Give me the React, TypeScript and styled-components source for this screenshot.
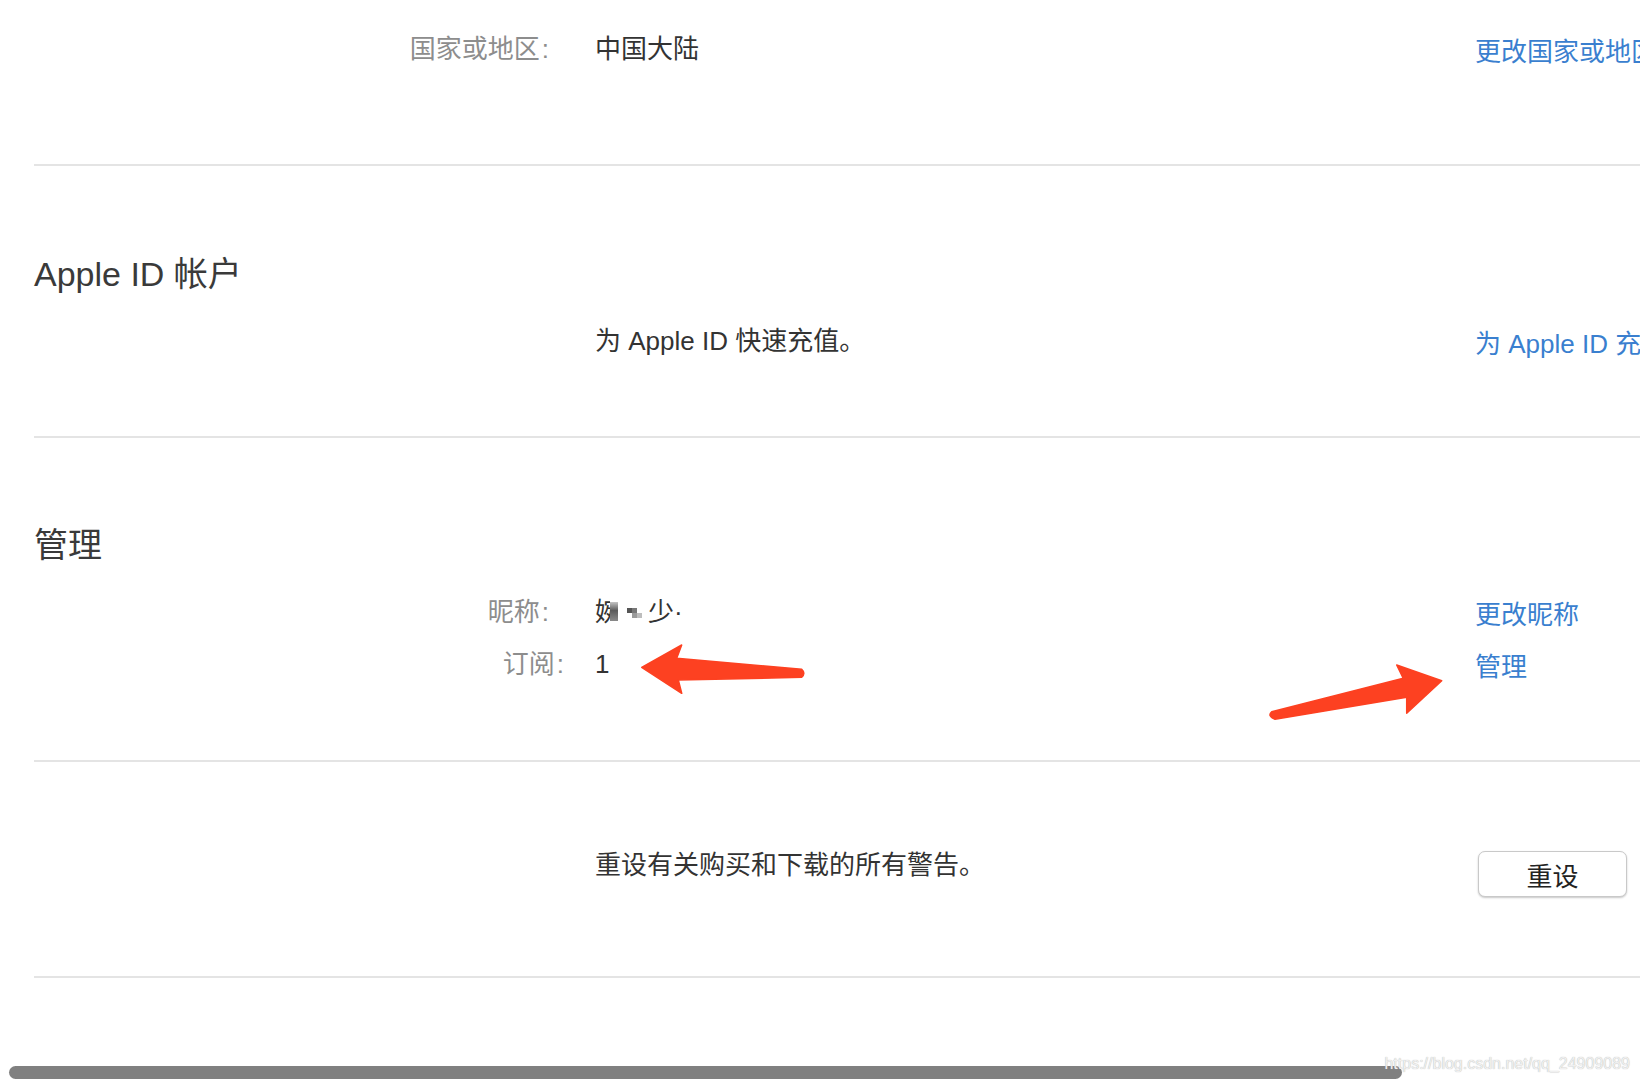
import React from 'react';
import styled, { createGlobalStyle } from 'styled-components';

const GlobalStyle = createGlobalStyle`
  html, body {
    margin: 0;
    padding: 0;
    background: #fff;
    overflow: hidden;
  }
  body {
    font-family: "Liberation Sans", "Noto Sans CJK SC", sans-serif;
  }
`;

const Page = styled.div`
  position: relative;
  width: 1640px;
  height: 1084px;
  overflow: hidden;
  background: #fff;
`;

const Content = styled.div`
  padding-left: 34px;
  width: 1800px;
`;

const Section = styled.section<{ $top: number; $bottom: number }>`
  padding: ${(p) => p.$top}px 0 ${(p) => p.$bottom}px;
  border-bottom: 2px solid #e4e4e4;
`;

const Heading = styled.h2`
  margin: 0 0 32px;
  height: 40px;
  font-size: 34px;
  line-height: 40px;
  font-weight: 400;
  color: #3a3a3a;
  white-space: nowrap;
`;

const Rows = styled.div`
  display: flex;
  flex-direction: column;
  gap: 22px;
`;

const Row = styled.div`
  display: grid;
  grid-template-columns: 517px 924px 1fr;
  align-items: start;
  font-size: 26px;
  line-height: 30px;
`;

const Label = styled.div<{ $shift?: number }>`
  height: 30px;
  text-align: right;
  color: #8d8d8d;
  white-space: nowrap;
  margin-right: ${(p) => -(p.$shift || 0)}px;
`;

const Colon = styled.span`
  margin-left: 2px;
  margin-right: 2px;
`;

const Value = styled.div`
  height: 30px;
  padding-left: 44px;
  color: #333;
  white-space: nowrap;
  display: flex;
  align-items: center;
`;

const Link = styled.a`
  display: block;
  height: 30px;
  transform: translateY(3px);
  color: #3a7fcf;
  text-decoration: none;
  white-space: nowrap;
  cursor: pointer;
`;

const LinkStack = styled.div`
  display: flex;
  flex-direction: column;
  gap: 22px;
`;

const Clip = styled.span`
  display: inline-block;
  width: 15px;
  overflow: hidden;
`;

const Pixel = styled.span<{ $w: number; $h: number; $bg: string; $dy?: number }>`
  display: inline-block;
  width: ${(p) => p.$w}px;
  height: ${(p) => p.$h}px;
  background: ${(p) => p.$bg};
  transform: translateY(${(p) => p.$dy || 0}px);
`;

const PixelGrid = styled.span`
  display: inline-grid;
  grid-template-columns: repeat(3, 5px);
  grid-template-rows: repeat(2, 5px);
  margin-left: 9px;
  transform: translateY(1px);
`;

const Cell = styled.span<{ $bg: string }>`
  background: ${(p) => p.$bg};
`;

const Tail = styled.span`
  margin-left: 6px;
`;

const ResetButton = styled.button`
  margin: 1px 0 0 3px;
  width: 149px;
  height: 46px;
  border: 1px solid #c9c9c9;
  border-radius: 7px;
  background: #fff;
  box-shadow: 0 1px 2px rgba(0, 0, 0, 0.22);
  font-family: inherit;
  font-size: 26px;
  color: #222;
  cursor: pointer;
`;

const Annotations = styled.svg`
  position: absolute;
  left: 0;
  top: 0;
  pointer-events: none;
`;

const Scrollbar = styled.div`
  position: absolute;
  left: 9px;
  top: 1066px;
  width: 1393px;
  height: 13px;
  border-radius: 7px;
  background: #808080;
`;

const Watermark = styled.div`
  position: absolute;
  right: 10px;
  top: 1054px;
  font-size: 16px;
  line-height: 20px;
  color: #f0f0f0;
  text-shadow: 0 0 1px #a8a8a8;
  white-space: nowrap;
`;

const App: React.FC = () => {
  return (
    <Page>
      <GlobalStyle />
      <Content>
        <Section $top={34} $bottom={100}>
          <Row>
            <Label>
              国家或地区<Colon>:</Colon>
            </Label>
            <Value>中国大陆</Value>
            <Link>更改国家或地区</Link>
          </Row>
        </Section>

        <Section $top={88} $bottom={80}>
          <Heading>Apple ID 帐户</Heading>
          <Row>
            <Label />
            <Value>为 Apple ID 快速充值。</Value>
            <Link>为 Apple ID 充值</Link>
          </Row>
        </Section>

        <Section $top={87} $bottom={81}>
          <Heading>管理</Heading>
          <Row>
            <Rows>
              <Label>
                昵称<Colon>:</Colon>
              </Label>
              <Label $shift={15}>
                订阅<Colon>:</Colon>
              </Label>
            </Rows>
            <Rows>
              <Value>
                <Clip>婉</Clip>
                <Pixel $w={8} $h={19} $bg="linear-gradient(#c4c4c4, #5a5a5a 45%, #8a8a8a)" $dy={-1} />
                <PixelGrid>
                  <Cell $bg="#555" />
                  <Cell $bg="#777" />
                  <Cell $bg="#fff" />
                  <Cell $bg="#fff" />
                  <Cell $bg="#9a9a9a" />
                  <Cell $bg="#bdbdbd" />
                </PixelGrid>
                <Tail>少·</Tail>
              </Value>
              <Value>1</Value>
            </Rows>
            <LinkStack>
              <Link>更改昵称</Link>
              <Link>管理</Link>
            </LinkStack>
          </Row>
        </Section>

        <Section $top={88} $bottom={79}>
          <Row>
            <Label />
            <Value>重设有关购买和下载的所有警告。</Value>
            <div>
              <ResetButton>重设</ResetButton>
            </div>
          </Row>
        </Section>
      </Content>

      <Annotations width="1640" height="1084" viewBox="0 0 1640 1084">
        <path
          d="M641.7 667.3 L681.7 645 L676.7 658.3 L801.7 669.3 Q806 673.3 801.7 677.3 L678.3 680 L681.7 693.3 Z"
          fill="#fd4121"
          stroke="#fd4121"
          strokeWidth="1.5"
          strokeLinejoin="round"
        />
        <path
          d="M1441.7 680.7 L1396.7 665 L1403.3 678.3 L1271.7 711.7 Q1267 716 1275 719.3 L1406.7 697.3 L1406.7 713.3 Z"
          fill="#fd4121"
          stroke="#fd4121"
          strokeWidth="1.5"
          strokeLinejoin="round"
        />
      </Annotations>

      <Scrollbar />
      <Watermark>https://blog.csdn.net/qq_24909089</Watermark>
    </Page>
  );
};

export default App;
